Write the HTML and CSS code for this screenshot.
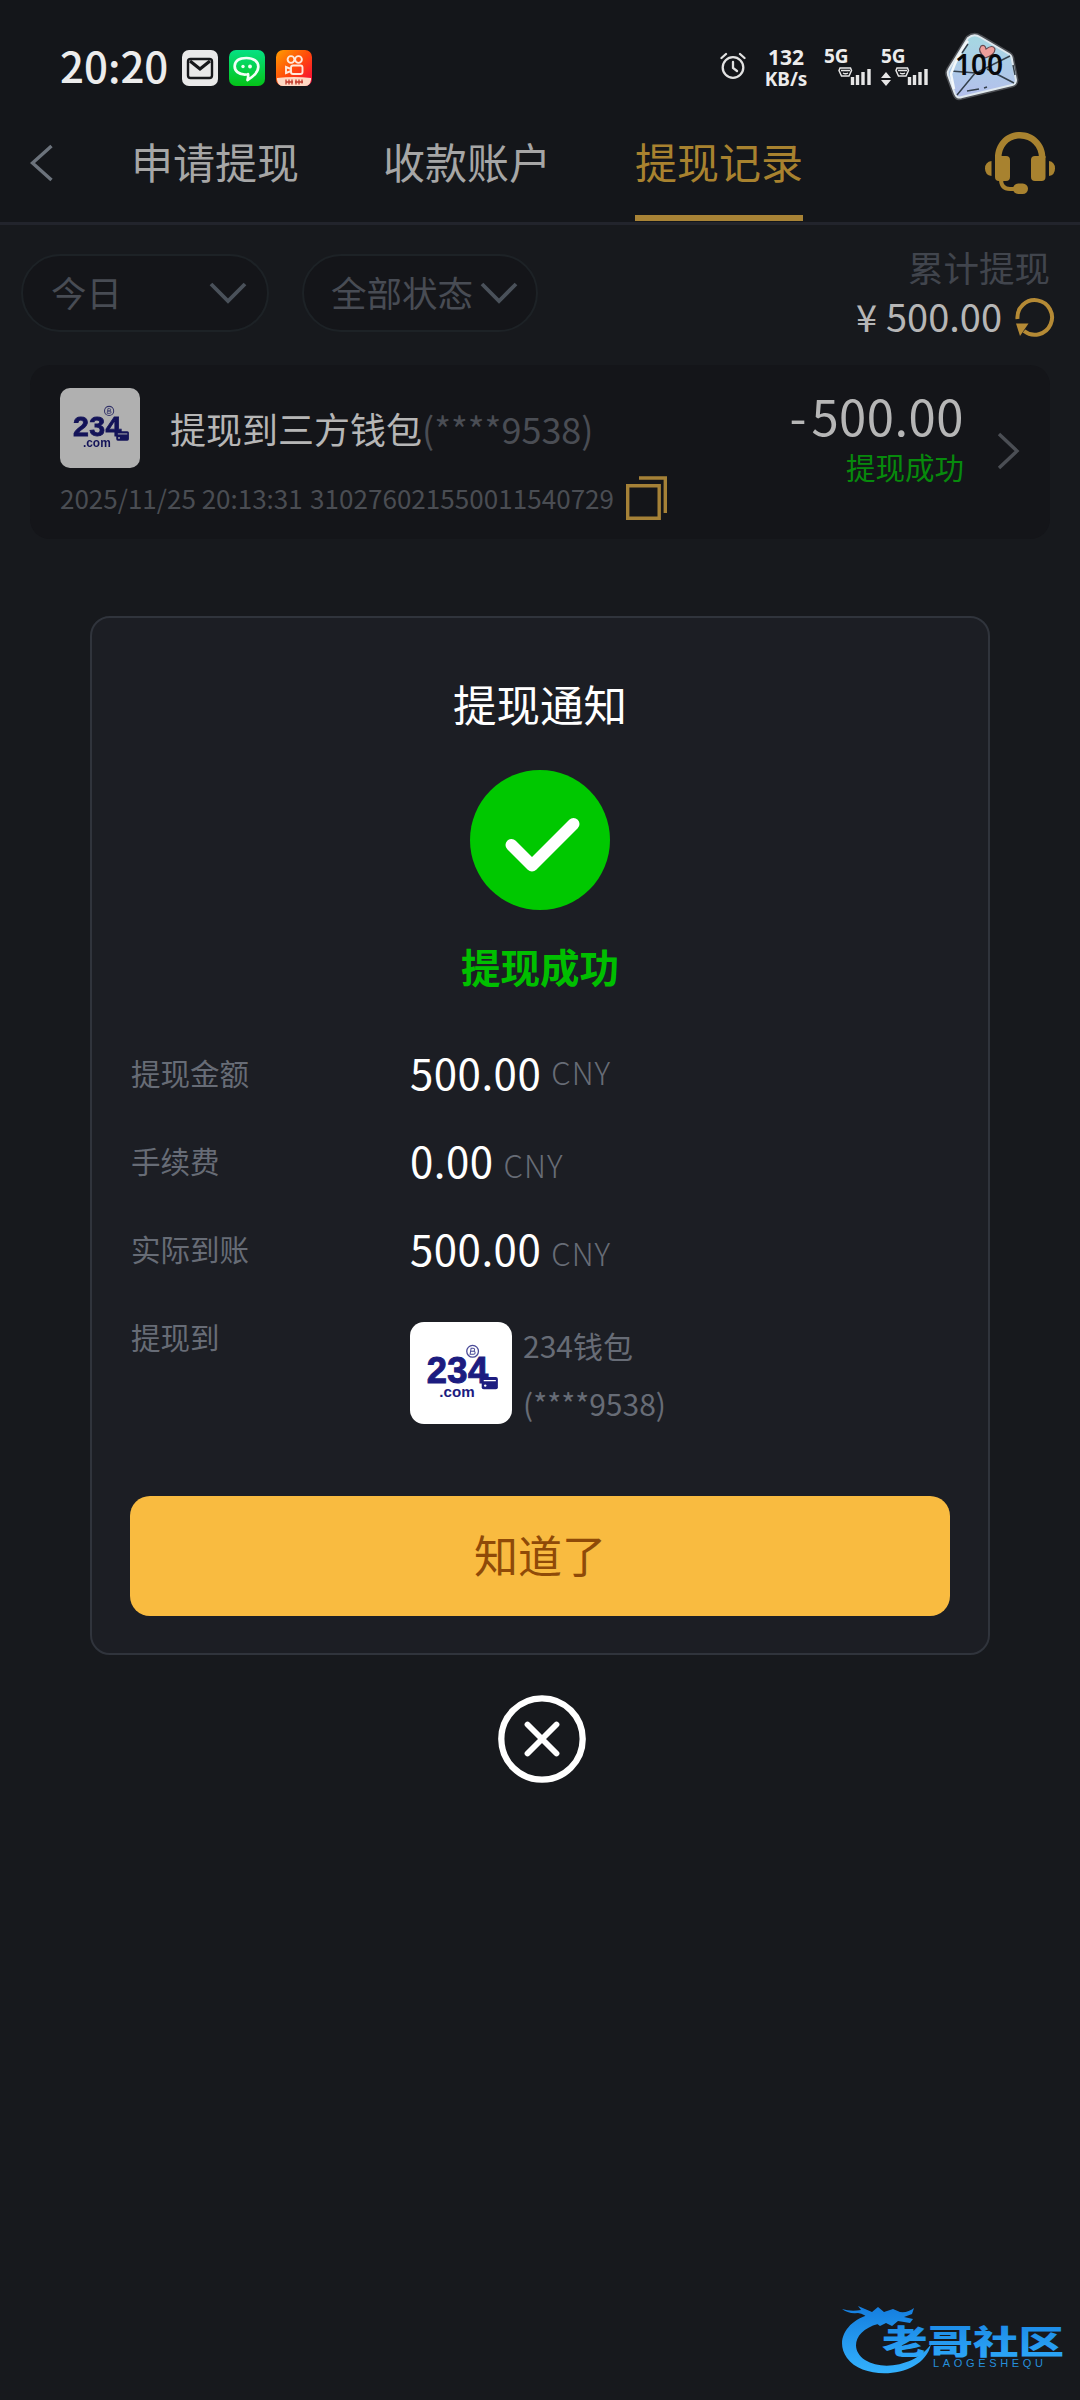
FILE: index.html
```html
<!DOCTYPE html>
<html lang="zh-CN">
<head>
<meta charset="utf-8">
<title>提现记录</title>
<link rel="stylesheet" href="styles.css">
</head>
<body>
<div class="screen">
  <div class="status">
    <span class="clock">20:20</span>
    <svg class="app-icon mail" viewBox="0 0 36 36">
      <rect width="36" height="36" rx="7" fill="#e9e9e9"/>
      <rect x="6" y="9" width="24" height="19" rx="2.500" fill="#e9e9e9" stroke="#17181b" stroke-width="2.400"/>
      <path d="M8 11l10 8 10-8" fill="none" stroke="#17181b" stroke-width="3.200"/>
    </svg>
    <svg class="app-icon chat" viewBox="0 0 36 36">
      <defs><linearGradient id="g1" x1="0" y1="0" x2="0" y2="1"><stop offset="0" stop-color="#05e183"/><stop offset="1" stop-color="#05c318"/></linearGradient></defs>
      <rect width="36" height="36" rx="7" fill="url(#g1)"/>
      <path d="M17 24.500C9.500 25 5.500 20.500 5.700 16 6 10.500 11 8 17.500 8 24.500 8 29.500 11.500 29.300 17 29 23 24.500 26.500 18.500 30q1-3 .5-6" fill="none" stroke="#f3fff6" stroke-width="2.700" stroke-linecap="round" stroke-linejoin="round"/>
      <circle cx="14" cy="16.500" r="1.700" fill="#f3fff6"/><circle cx="21" cy="16.500" r="1.900" fill="#f3fff6"/>
    </svg>
    <svg class="app-icon video" viewBox="0 0 36 36">
      <defs><linearGradient id="g2" x1="0" y1="0" x2="1" y2="1"><stop offset="0" stop-color="#ff9d00"/><stop offset=".5" stop-color="#ff4a0b"/><stop offset="1" stop-color="#f5003e"/></linearGradient></defs>
      <rect width="36" height="36" rx="7" fill="url(#g2)"/>
      <g fill="none" stroke="#ffe9dc" stroke-width="1.900"><circle cx="15" cy="9.500" r="3.400"/><circle cx="22.500" cy="9.500" r="3.400"/><rect x="15" y="15.500" width="11.500" height="8.500" rx="2"/><path d="M15 19l-5-2v6l5-2"/></g>
      <path d="M1 28q17-2 34 0v2q-1 6-6 6H7q-5 0-6-6z" fill="#ffd9c4"/>
      <path d="M10 29.500v5M13 29.500v5M16 29.500v5M10 32h7M20 29.500v5M23 29.500v5M26 29.500v4M19 32h8" stroke="#c0392b" stroke-width="1.300"/>
    </svg>
    <span class="spacer"></span>
    <svg class="alarm" viewBox="0 0 26 28">
      <g fill="none" stroke="#e2e2e2" stroke-width="2.300" stroke-linecap="round"><circle cx="13" cy="15.500" r="10.300"/><path d="M13 10v6l4 3M1.500 6l4.500-4M24.500 6l-4.500-4"/></g>
    </svg>
    <div class="speed"><span class="num">132</span><span>KB/s</span></div>
    <div class="net net-a">
      <svg class="bars" viewBox="0 0 34 36">
        <path d="M3 18h10.500l1 2.500-2.500 5.500h-7.500l-2.500-5.500z" fill="none" stroke="#e6e6e6" stroke-width="1.500"/>
        <path d="M4 20.500h9M6 23q2.500 1.500 5 0" fill="none" stroke="#e6e6e6" stroke-width="1.300"/>
        <path d="M15.500 35v-8M20.500 35v-10M26 35v-13M32 35v-16" stroke="#e6e6e6" stroke-width="3.400"/>
      </svg>
      <span>5G</span>
    </div>
    <div class="net net-b">
      <svg class="bars" viewBox="0 0 34 36">
        <path d="M3 18h10.500l1 2.500-2.500 5.500h-7.500l-2.500-5.500z" fill="none" stroke="#e6e6e6" stroke-width="1.500"/>
        <path d="M4 20.500h9M6 23q2.500 1.500 5 0" fill="none" stroke="#e6e6e6" stroke-width="1.300"/>
        <path d="M15.500 35v-8M20.500 35v-10M26 35v-13M32 35v-16" stroke="#e6e6e6" stroke-width="3.400"/>
      </svg>
      <svg class="updown" viewBox="0 0 10 14"><path d="M5 0l5 6H0zM5 14l5-6H0z" fill="#e6e6e6"/></svg>
      <span>5G</span>
    </div>
    <div class="battery">
      <svg viewBox="0 0 80 74">
        <defs><linearGradient id="g3" x1="0" y1="0" x2="0" y2="1"><stop offset="0" stop-color="#a5d8e2"/><stop offset="1" stop-color="#b4bfec"/></linearGradient></defs>
        <path d="M25 9Q31 4 37 8L66 25Q69 27 69 31L73 51Q73 55 69 56L19 68Q14 70 12 65L5 46Q4 43 6 40Z" fill="url(#g3)" stroke="#4d4f54" stroke-width="5"/>
        <path d="M25 9Q31 4 37 8L66 25Q69 27 69 31L73 51Q73 55 69 56L19 68Q14 70 12 65L5 46Q4 43 6 40Z" fill="url(#g3)" stroke="#dfe8ee" stroke-width="2"/>
        <path d="M8 42L33 44 67 27M33 43L14 66M44 40L71 54" fill="none" stroke="#34404c" stroke-width="1.500"/>
        <path d="M11 60L8 45Q15 25 25 12" fill="none" stroke="#f3f8fa" stroke-width="2.500"/>
        <path d="M24 62l12-2M41 59l3-1M19 24l6-9M70 36l2 10" stroke="#34404c" stroke-width="1.500"/>
        <path d="M42 29Q34 22 38 17 42 15 43 20 50 15 52 20 52 26 42 29Z" fill="#ef9f9b" stroke="#684a50" stroke-width="1.200"/>
      </svg>
      <span>100</span>
    </div>
  </div>

  <div class="header">
    <svg class="back" viewBox="0 0 24 38"><path d="M21.500 2L2.500 19l19 17" fill="none" stroke="#6c737c" stroke-width="3.400"/></svg>
    <div class="tabs">
      <span class="tab">申请提现</span>
      <span class="tab">收款账户</span>
      <span class="tab active">提现记录</span>
    </div>
    <svg class="headset" viewBox="0 0 70 62">
      <g fill="#a8822f">
        <path d="M10 26C10 11 21 0 35 0S60.500 11 60.500 26H54C54 15 46 6.500 35 6.500S16.500 15 16.500 26Z"/>
        <path d="M10 24h11q4 0 4 4v17q0 4-4 4h-7q-4 0-4-4zM60.500 24H50q-4 0-4 4v17q0 4 4 4h6.500q4 0 4-4z"/>
        <path d="M6.500 29v15Q0 43 0 36.500T6.500 29zM64 29v15q6-1 6-7.500T64 29z"/>
        <rect x="28" y="51.500" width="15" height="10.500" rx="5.250"/>
      </g>
      <path d="M16 47q0 10 9 10h6" fill="none" stroke="#a8822f" stroke-width="4"/>
    </svg>
  </div>

  <div class="filters">
    <div class="pill pill-day"><span>今日</span><svg class="chev" viewBox="0 0 38 22"><path d="M2 2l17 17L36 2" fill="none" stroke="#4a515a" stroke-width="3.800"/></svg></div>
    <div class="pill pill-state"><span>全部状态</span><svg class="chev" viewBox="0 0 38 22"><path d="M2 2l17 17L36 2" fill="none" stroke="#4a515a" stroke-width="3.800"/></svg></div>
    <div class="total">
      <div class="total-label">累计提现</div>
      <div class="total-value"><span class="yen">¥</span><span>500.00</span>
        <svg class="refresh" viewBox="0 0 40 40"><path d="M2.500 22A17.300 17.300 0 1 1 9 34" fill="none" stroke="#b58a35" stroke-width="4"/><path d="M1 26.500h12.500L5 39z" fill="#b58a35"/></svg>
      </div>
    </div>
  </div>

  <div class="record">
    <div class="record-main">
      <div class="record-title">
        <div class="logo logo-small">
          <svg viewBox="0 0 101 101">
            <text class="logo-num" x="16.500" y="60" textLength="61">234</text>
            <text class="logo-com" x="29" y="74" textLength="35">.com</text>
            <circle cx="62" cy="29" r="5.800" fill="none" stroke="#4a4a98" stroke-width="1.300"/>
            <path d="M60.500 26h2a1.500 1.500 0 0 1 0 3h-2h2.500a1.500 1.500 0 0 1 0 3h-3.500z" fill="none" stroke="#4a4a98"/>
            <rect x="71" y="54.500" width="16" height="12" rx="2" fill="#1c1c80"/>
            <path d="M73 58h12" stroke="#fff" stroke-width="1.200"/>
            <circle cx="74.500" cy="63" r="1.200" fill="#fff"/>
          </svg>
        </div>
        <span class="name">提现到三方钱包</span><span class="mask">(****9538)</span>
      </div>
      <div class="record-meta">
        <span class="time">2025/11/25 20:13:31</span><span class="order">310276021550011540729</span>
        <svg class="copy" viewBox="0 0 42 44"><path d="M1.700 9.700h31.500v32.500H1.700zM13 2h26.300v35" fill="none" stroke="#a58137" stroke-width="3.400"/></svg>
      </div>
    </div>
    <div class="record-side">
      <div class="amount"><span class="minus">-</span>500.00</div>
      <div class="state">提现成功</div>
    </div>
    <svg class="next" viewBox="0 0 23 38"><path d="M2 2l18 17L2 36" fill="none" stroke="#4b4e54" stroke-width="3.400"/></svg>
  </div>

  <div class="overlay">
    <div class="dialog">
      <div class="dialog-title">提现通知</div>
      <svg class="ok" viewBox="0 0 140 140"><circle cx="70" cy="70" r="70" fill="#00c800"/><path d="M41.500 75L62 95.500 103.500 54" fill="none" stroke="#fff" stroke-width="12" stroke-linecap="round" stroke-linejoin="round"/></svg>
      <div class="result">提现成功</div>
      <div class="rows">
        <div class="row first"><span class="label">提现金额</span><span class="value">500.00</span><span class="unit">CNY</span></div>
        <div class="row"><span class="label">手续费</span><span class="value">0.00</span><span class="unit">CNY</span></div>
        <div class="row"><span class="label">实际到账</span><span class="value">500.00</span><span class="unit">CNY</span></div>
        <div class="row target"><span class="label">提现到</span>
          <div class="logo logo-large">
            <svg viewBox="0 0 101 101">
              <text class="logo-num" x="16.500" y="60" textLength="61">234</text>
              <text class="logo-com" x="29" y="74" textLength="35">.com</text>
              <circle cx="62" cy="29" r="5.800" fill="none" stroke="#4a4a98" stroke-width="1.300"/>
              <path d="M60.500 26h2a1.500 1.500 0 0 1 0 3h-2h2.500a1.500 1.500 0 0 1 0 3h-3.500z" fill="none" stroke="#4a4a98"/>
              <rect x="71" y="54.500" width="16" height="12" rx="2" fill="#1c1c80"/>
              <path d="M73 58h12" stroke="#fff" stroke-width="1.200"/>
              <circle cx="74.500" cy="63" r="1.200" fill="#fff"/>
            </svg>
          </div>
          <div class="wallet"><span>234钱包</span><span>(****9538)</span></div>
        </div>
      </div>
      <div class="confirm">知道了</div>
    </div>
    <svg class="close" viewBox="0 0 88 88"><circle cx="44" cy="44" r="40.700" fill="none" stroke="#fff" stroke-width="6.300"/><path d="M29.500 29.500l29 29M58.500 29.500l-29 29" stroke="#fff" stroke-width="5.800" stroke-linecap="round"/></svg>
  </div>

  <svg class="watermark" viewBox="0 0 226 74">
    <defs><linearGradient id="g4" gradientUnits="userSpaceOnUse" x1="0" y1="4" x2="0" y2="72"><stop offset="0" stop-color="#157fe0"/><stop offset="1" stop-color="#35b4ff"/></linearGradient></defs>
    <path d="M32 10C8 15-6 36 7 54 24 78 84 74 91 40 78 60 44 68 25 56 9 45 15 26 38 20Z" fill="url(#g4)"/>
    <path d="M2 5Q11 8 21 6L18 2 32 8 38 3 44 8 53 5 60 8Q68 9 74 4L72 10 64 13 73 15 70 19 58 17 52 22 46 19 40 22 36 19 28 22 30 16Q25 10 18 9 8 10 2 5Z" fill="url(#g4)"/>
    <text class="mark-cn" x="42" y="49.500" textLength="182" lengthAdjust="spacingAndGlyphs" fill="url(#g4)">老哥社区</text>
    <text class="mark-en" x="93" y="63" textLength="110" fill="#268fdb">LAOGESHEQU</text>
  </svg>
</div>
</body>
</html>
```
FILE: styles.css
```css
* { box-sizing: border-box; }

body {
  margin: 0;
  background: #17191d;
  font-family: "Noto Sans CJK SC", sans-serif;
  color: #fff;
}

svg { display: block; flex: none; }
span { white-space: nowrap; }

.screen {
  position: relative;
  width: 1080px;
  height: 2400px;
  overflow: hidden;
  background: #17191d;
}

/* status bar */
.status {
  display: flex;
  align-items: center;
  height: 101px;
  padding: 34px 60px 0 60px;
  background: #14161a;
  color: #ececec;
}
.clock {
  width: 122px;
  font-size: 42px;
  font-weight: 500;
  line-height: 60px;
  margin-top: -6px;
}
.app-icon { width: 36px; height: 36px; margin-right: 11px; }
.spacer { flex: 1; }
.alarm { width: 26px; height: 28px; margin: -3px 18px 0 0; }
.speed {
  display: flex;
  flex-direction: column;
  align-items: center;
  width: 44px;
  font: 700 19px/22px "Noto Sans", sans-serif;
  margin-right: 16px;
}
.speed .num { font-size: 21px; }
.net {
  position: relative;
  width: 47px;
  height: 36px;
  font: 700 19px/22px "Noto Sans", sans-serif;
}
.net span { display: block; margin-top: -5px; }
.net-a { margin-right: 10px; }
.net-b { margin-right: 16px; }
.bars { position: absolute; right: 0; bottom: 0; width: 34px; height: 36px; }
.updown { position: absolute; left: 0; bottom: 0; width: 10px; height: 14px; }
.battery {
  position: relative;
  width: 76px;
  height: 70px;
}
.battery svg { width: 80px; height: 74px; margin: -4px 0 0 -1px; }
.battery span {
  position: absolute;
  left: 11px;
  top: 13px;
  font: 600 28px/36px "Noto Sans", sans-serif;
  color: #08090b;
}

/* header */
.header {
  display: flex;
  align-items: center;
  height: 124px;
  padding: 0 25px 0 30px;
  border-bottom: 3px solid #22242c;
  background: #14161a;
}
.back { width: 24px; height: 38px; margin-top: 3px; }
.tabs {
  display: flex;
  gap: 84px;
  height: 121px;
  margin: 0 auto 0 77px;
}
.tab {
  height: 120px;
  font-size: 42px;
  line-height: 120px;
  color: #a6a6a6;
}
.tab.active {
  color: #a8822f;
  border-bottom: 6px solid #a88336;
}
.headset { width: 70px; height: 62px; margin-top: 2px; }

/* filters */
.filters {
  display: flex;
  align-items: flex-start;
  height: 140px;
  padding: 29px 25px 0 21px;
}
.pill {
  display: flex;
  align-items: center;
  justify-content: space-between;
  height: 78px;
  border: 2px solid #1d2226;
  border-radius: 39px;
  background: #141519;
  font-size: 35.500px;
  color: #484c54;
}
.pill span { line-height: 60px; margin-top: -3px; }
.pill-day { width: 248px; padding: 0 20px 0 28px; }
.pill-state { width: 236px; margin-left: 33px; padding: 0 18px 0 27px; }
.chev { width: 38px; height: 22px; }
.total {
  display: flex;
  flex-direction: column;
  align-items: flex-end;
  margin-left: auto;
}
.total-label {
  margin: -11px 5px 0 0;
  font-size: 35.500px;
  line-height: 48px;
  color: #41454d;
}
.total-value {
  display: flex;
  align-items: center;
  margin-top: 1px;
  font-size: 38px;
  line-height: 48px;
  color: #b6b6b6;
}
.yen { margin-right: 9px; }
.refresh { width: 40px; height: 40px; margin: 2px 0 0 13px; }

/* record card */
.record {
  display: flex;
  align-items: flex-start;
  width: 1020px;
  height: 174px;
  margin: 0 30px;
  padding: 23px 30px 0;
  border-radius: 20px;
  background: #141519;
}
.record-main { flex: 1; }
.record-title {
  display: flex;
  align-items: center;
  height: 80px;
  font-size: 36px;
  line-height: 80px;
}
.name { margin-left: 30px; color: #b6b6b6; }
.mask { color: #4a4d54; }
.record-meta {
  display: flex;
  align-items: center;
  height: 44px;
  margin-top: 8px;
  font-size: 26px;
  line-height: 42px;
  color: #4a4d53;
}
.record-meta .time { width: 250px; }
.record-meta .order { width: 307px; letter-spacing: .05px; }
.copy { width: 42px; height: 44px; margin-left: 9px; }
.record-side { text-align: right; margin-right: 33px; }
.amount { margin-top: -4px; font-size: 49px; letter-spacing: .5px; line-height: 62px; color: #b6b6b6; }
.minus { letter-spacing: 5px; }
.state { margin-top: 2px; font-size: 29.500px; line-height: 36px; color: #078a0c; }
.next { width: 23px; height: 38px; margin-top: 44px; }

.logo {
  flex: none;
  overflow: hidden;
  background: #fff;
}
.logo svg { width: 100%; height: 100%; }
.logo-small { width: 80px; height: 80px; border-radius: 10px; filter: brightness(.69); }
.logo-large { width: 102px; height: 102px; margin-top: 30px; border-radius: 14px; }
.logo-num {
  font: 700 36px "Liberation Sans", sans-serif;
  fill: #1c1c80;
  stroke: #1c1c80;
  stroke-width: 1;
}
.logo-com {
  font: 700 15px "Liberation Sans", sans-serif;
  fill: #1c1c80;
}

/* notice dialog */
.overlay {
  position: absolute;
  inset: 616px 0 auto;
  display: flex;
  flex-direction: column;
  align-items: center;
}
.dialog {
  display: flex;
  flex-direction: column;
  width: 900px;
  height: 1039px;
  padding: 53px 38px 0;
  border: 2px solid #30343c;
  border-radius: 20px;
  background: #1c1e24;
}
.dialog-title {
  text-align: center;
  font-size: 43.500px;
  line-height: 66px;
}
.ok { width: 140px; height: 140px; margin: 33px auto 0; }
.result {
  margin-top: 25px;
  text-align: center;
  font-size: 39.500px;
  font-weight: 700;
  line-height: 62px;
  color: #00bf00;
}
.rows { margin-top: 31px; }
.row {
  display: flex;
  align-items: baseline;
  height: 88px;
  line-height: 88px;
  color: #676c76;
}
.label {
  width: 280px;
  padding-left: 1px;
  font-size: 29.500px;
  align-self: flex-start;
}
.value { font-size: 42px; letter-spacing: .5px; color: #fff; }
.unit { margin-left: 10px; font-size: 31px; font-weight: 300; letter-spacing: 1px; }
.first .unit { align-self: flex-start; }
.target { align-items: flex-start; height: 154px; }
.wallet {
  display: flex;
  flex-direction: column;
  margin: 24px 0 0 11px;
  font-size: 30px;
  line-height: 58px;
}
.confirm {
  margin-top: 50px;
  height: 120px;
  border-radius: 20px;
  background: #f9bb40;
  text-align: center;
  font-size: 44px;
  line-height: 117px;
  color: #8f4a08;
}
.close { width: 88px; height: 88px; margin: 40px 0 0 3px; }

/* corner mark */
.watermark {
  position: absolute;
  left: 840px;
  top: 2304px;
  width: 226px;
  height: 74px;
}
.mark-cn { font: 900 33px "Noto Sans CJK SC", sans-serif; }
.mark-en { font: 400 11px "Liberation Sans", sans-serif; }
```
